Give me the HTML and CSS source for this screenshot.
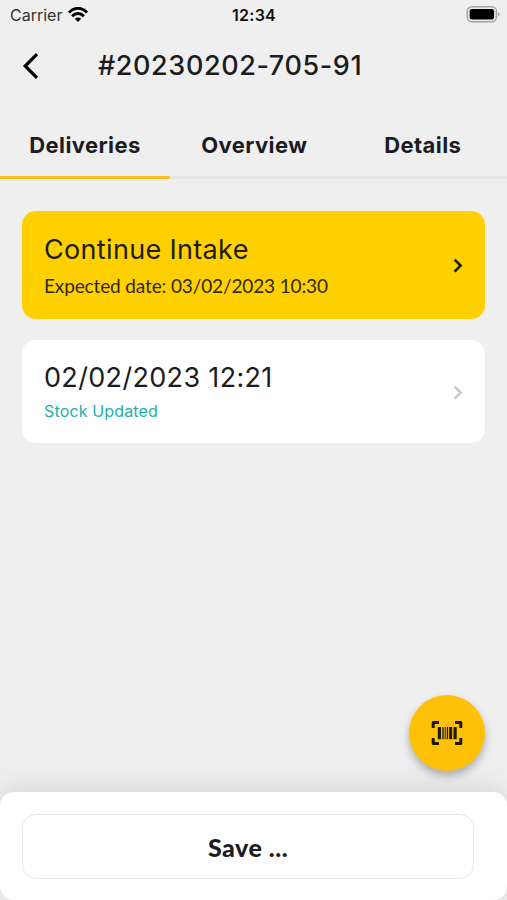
FILE: index.html
```html
<!DOCTYPE html>
<html lang="en">
<head>
<meta charset="utf-8">
<meta name="viewport" content="width=device-width, initial-scale=1">
<title>Deliveries</title>
<link rel="stylesheet" href="styles.css">
</head>
<body>
<div class="screen">
  <div class="status">
    <div class="status-left">
      <span class="carrier">Carrier</span>
      <svg class="wifi" width="20" height="16" viewBox="0 0 20 16" fill="none" stroke="#000" stroke-width="3">
        <path d="M1 5.6C6-.1 14-.1 19 5.6"/>
        <path d="M4.1 9.2C7.6 5.6 12.4 5.6 15.9 9.2"/>
        <path d="M10 15 6.8 11.8Q10 9.1 13.2 11.8Z" fill="#000" stroke="none"/>
      </svg>
    </div>
    <span class="clock">12:34</span>
    <svg class="battery" width="34" height="17" viewBox="0 0 34 17">
      <rect x="1.2" y=".8" width="29.2" height="15" rx="4.5" fill="none" stroke="#a5a5a5" stroke-width="1.5"/>
      <rect x="3.6" y="3.1" width="24.5" height="10.4" rx="2.2"/>
      <path d="M31.9 6v4.4q1.7-.8 1.7-2.2t-1.7-2.2Z" fill="#a5a5a5"/>
    </svg>
  </div>

  <header class="header">
    <svg class="back" width="18" height="28" viewBox="0 0 18 28" fill="none" stroke="#000" stroke-width="3.2"><path d="M16 2.2 4.2 14 16 25.8"/></svg>
    <h1 class="title">#20230202-705-91</h1>
  </header>

  <nav class="tabs">
    <span class="tab tab-active">Deliveries</span>
    <span class="tab">Overview</span>
    <span class="tab">Details</span>
  </nav>

  <main class="list">
    <article class="card card-intake">
      <div>
        <h2 class="card-title">Continue Intake</h2>
        <p class="expected">Expected date: 03/02/2023 10:30</p>
      </div>
      <svg class="chevron" width="12" height="16" viewBox="0 0 12 16"><path d="M2.6 2.6 8.6 8.6 2.6 14.6"/></svg>
    </article>
    <article class="card card-delivery">
      <div>
        <h2 class="card-title">02/02/2023 12:21</h2>
        <p class="stock">Stock Updated</p>
      </div>
      <svg class="chevron" width="12" height="16" viewBox="0 0 12 16"><path d="M2.6 2.6 8.6 8.6 2.6 14.6"/></svg>
    </article>
  </main>

  <button class="scan" aria-label="Scan barcode">
    <svg width="32" height="26" viewBox="0 0 32 26">
      <path d="M2.2 8V2.5H8M24 2.5h5.8V8M29.8 18v5.5H24M8 23.5H2.2V18" fill="none" stroke="#1d1b00" stroke-width="3" stroke-linejoin="round"/>
      <path d="M6.8 7h3.2v12.2H6.8zM11.3 7h1.3v12.2h-1.3zM13.7 7h1v12.2h-1zM15.8 7h1.3v12.2h-1.3zM18.1 7h3.1v12.2h-3.1zM22.5 7h3.2v12.2h-3.2z" fill="#1d1b00"/>
    </svg>
  </button>

  <footer class="footer">
    <button class="save">Save ...</button>
  </footer>
</div>
</body>
</html>
```
FILE: styles.css
```css
* { box-sizing: border-box; }
body { margin: 0; background: #efefef; color: #1c1c1e; font-family: Inter, sans-serif; }
h1, h2, p { margin: 0; }
svg { display: block; flex: none; }
button { border: 0; padding: 0; color: inherit; }

.screen { position: relative; display: flex; flex-direction: column; height: 900px; overflow: hidden; }

.status { display: grid; grid-template-columns: 1fr auto 1fr; align-items: center; height: 30px; padding: 0 7px 0 10px; }
.status-left { display: flex; align-items: center; gap: 6px; }
.carrier { font-size: 16px; color: #333; }
.clock { margin-left: -2px; font-size: 16px; font-weight: 600; letter-spacing: 0.3px; color: #111; }
.battery { justify-self: end; margin-top: -2px; }

.header { display: flex; align-items: center; height: 72px; padding-left: 21px; }
.title { margin-left: 59px; font-size: 27px; font-weight: 500; letter-spacing: 0.6px; line-height: 32px; }

.tabs { display: grid; grid-template-columns: repeat(3, 1fr); height: 77px; border-bottom: 3px solid #e6e6e6; }
.tab { display: flex; align-items: center; justify-content: center; height: 77px; padding-top: 8px; font-size: 22px; font-weight: 700; letter-spacing: 0.42px; }
.tab-active { width: 170px; padding-top: 11px; border-bottom: 3px solid #fcbf22; }

.list { display: flex; flex-direction: column; gap: 21px; padding: 32px 22px 0; }
.card { display: flex; align-items: center; justify-content: space-between; padding: 0 21px 0 22px; border-radius: 14px; }
.card-intake { height: 108px; background: #ffd000; }
.card-delivery { height: 103px; background: #fff; }
.card-title { font-size: 27px; font-weight: 400; line-height: 34px; letter-spacing: 0.33px; white-space: nowrap; }
.expected { margin-top: 7px; font-family: Lato, sans-serif; font-size: 19px; line-height: 24px; letter-spacing: -0.13px; color: #302a09; white-space: nowrap; }
.stock { margin-top: 5px; font-size: 16px; line-height: 22px; letter-spacing: 0.15px; color: #20b2a5; }
.chevron { fill: none; stroke: #1d1b00; stroke-width: 2.6; }
.card-delivery .chevron { stroke: #c8c8c8; }

.scan { position: absolute; right: 22px; bottom: 129px; display: flex; align-items: center; justify-content: center; width: 76px; height: 76px; border-radius: 50%; background: #ffc107; box-shadow: 0 5px 9px rgba(0, 0, 0, 0.28); }

.footer { height: 108px; margin-top: auto; padding: 22px 33px 22px 22px; background: #fff; border-radius: 14px; box-shadow: 0 -4px 28px rgba(0, 0, 0, 0.11); }
.save { width: 100%; height: 65px; border: 1.5px solid #e9e9e9; border-radius: 14px; background: #fff; font-family: Lato, sans-serif; font-size: 25px; font-weight: 900; letter-spacing: 0.5px; }
```
